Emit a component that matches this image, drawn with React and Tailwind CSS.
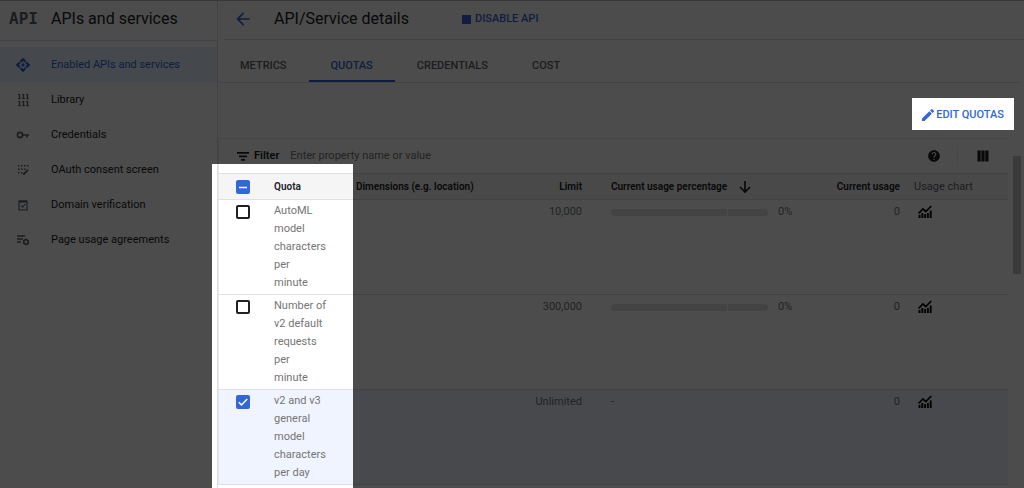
import React, { useState } from "react";
import { MdArrowBack, MdEdit, MdHelp } from "react-icons/md";

const EnabledIcon = () => (
  <svg viewBox="0 0 24 24" className="w-4 h-4" fill="currentColor">
    <path d="M12 1l5 5-2.500 2.500L12 6 9.500 8.500 7 6zM12 23l-5-5 2.500-2.500L12 18l2.500-2.500L17 18zM1 12l5-5 2.500 2.500L6 12l2.500 2.500L6 17zM23 12l-5 5-2.500-2.500L18 12l-2.500-2.500L18 7z" />
    <circle cx="12" cy="12" r="2.500" />
  </svg>
);

const LibraryIcon = () => (
  <svg viewBox="0 0 12 14" className="w-3 h-3.5" fill="none" stroke="currentColor" strokeWidth="1.400">
    <path d="M2.500 1v5M6.500 1v5M10.500 1v5M2.500 8v5M6.500 8v5M10.500 8v5" />
    <path d="M1 1.500h1.500M5 1.500h1.500M9 1.500h1.500M1 5.700h3M5 5.700h3M9 5.700h3M1 8.500h1.500M5 8.500h1.500M9 8.500h1.500M1 12.700h3M5 12.700h3M9 12.700h3" strokeWidth="0.900" />
  </svg>
);

const KeyIcon = () => (
  <svg viewBox="0 0 14 12" className="w-3.5 h-3" fill="none" stroke="currentColor" strokeWidth="1.600">
    <circle cx="4" cy="6" r="2.600" />
    <path d="M6.500 6H13M10.800 6v2.600" />
  </svg>
);

const ConsentIcon = () => (
  <svg viewBox="0 0 12 12" className="w-3 h-3" fill="currentColor">
    <path d="M1 1h1.500v1.500H1zM4 1h1.500v1.500H4zM7 1h1.500v1.500H7zM10 1h1.500v1.500H10zM1 4.500h1.500V6H1zM4 4.500h1.500V6H4zM7 4.500h1.500V6H7zM1 8h1.500v1.500H1zM4 8h1.500v1.500H4zM6 11V9.600L10.500 5l1.200 1.300L7.300 11z" />
  </svg>
);

const DomainIcon = () => (
  <svg viewBox="0 0 12 12" className="w-3 h-3" fill="none" stroke="currentColor">
    <path d="M2 2h8v9H2z" strokeWidth="1.200" />
    <path d="M2 2.500h8" strokeWidth="2" />
    <path d="M4 6.500l1.500 1.700L8.300 5" strokeWidth="1.100" />
  </svg>
);

const AgreementsIcon = () => (
  <svg viewBox="0 0 14 12" className="w-3.5 h-3" fill="none" stroke="currentColor">
    <path d="M1 2h8M1 5h6M1 8h4" strokeWidth="1.300" />
    <circle cx="10" cy="8" r="2.200" strokeWidth="1.500" />
    <path d="M10 4.500v1.300M10 10.200v1.300M7 6.300l1.100.600M11.900 9.100l1.100.600M7 9.700l1.100-.600M11.900 6.900l1.100-.600" strokeWidth="1.200" />
  </svg>
);

const FilterIcon = () => (
  <svg viewBox="0 0 16 16" className="w-4 h-4" fill="currentColor">
    <path d="M2 4h12v1.800H2zM4 7.500h8v1.800H4zM6 11h4v1.800H6z" />
  </svg>
);

const ColumnsIcon = () => (
  <svg viewBox="0 0 16 16" className="w-4 h-4" fill="currentColor">
    <path d="M2.500 2.500h3.200v11H2.500zM6.400 2.500h3.200v11H6.400zM10.300 2.500h3.200v11h-3.200z" />
  </svg>
);

const SortIcon = () => (
  <svg viewBox="0 0 16 16" className="w-4 h-4" fill="none" stroke="currentColor" strokeWidth="1.700">
    <path d="M8 2v11M3 8l5 5 5-5" />
  </svg>
);

const ChartIcon = () => (
  <svg viewBox="0 0 14 14" className="w-3.5 h-3.5" fill="none" stroke="currentColor">
    <path d="M1.500 10v3M4.300 8v5M7.100 9v4M9.900 8v5M12.700 5.500V13" strokeWidth="1.900" />
    <path d="M.500 8.500L5 4l2.800 2.500L13.300 1" strokeWidth="1.700" />
  </svg>
);

const navItems = [
  { label: "Enabled APIs and services", icon: <EnabledIcon />, active: true },
  { label: "Library", icon: <LibraryIcon /> },
  { label: "Credentials", icon: <KeyIcon /> },
  { label: "OAuth consent screen", icon: <ConsentIcon /> },
  { label: "Domain verification", icon: <DomainIcon /> },
  { label: "Page usage agreements", icon: <AgreementsIcon /> },
];

const tabs = ["METRICS", "QUOTAS", "CREDENTIALS", "COST"];

const initialQuotas = [
  { name: "AutoML model characters per\nminute", limit: "10,000", percent: 0, usage: 0, checked: false },
  { name: "Number of v2 default requests per\nminute", limit: "300,000", percent: 0, usage: 0, checked: false },
  { name: "v2 and v3 general model characters per day", limit: "Unlimited", percent: null, usage: 0, checked: true },
];

const Checkbox = ({ label, checked, mixed, onChange }) => (
  <span className="grid w-3.5 h-3.5">
    <input
      type="checkbox"
      aria-label={label}
      checked={checked}
      ref={(el) => { if (el) el.indeterminate = Boolean(mixed); }}
      onChange={onChange}
      className="col-start-1 row-start-1 appearance-none w-3.5 h-3.5 rounded-[2px] border-2 border-[#202124] checked:border-[#3367d6] checked:bg-[#3367d6] indeterminate:border-[#3367d6] indeterminate:bg-[#3367d6]"
    />
    {(checked || mixed) && (
      <svg viewBox="0 0 14 14" className="col-start-1 row-start-1 w-3.5 h-3.5 pointer-events-none" fill="none" stroke="white" strokeWidth="1.500">
        <path d={mixed ? "M3 7.500h8" : "M2.800 7.200l2.700 2.700 5.700-5.900"} />
      </svg>
    )}
  </span>
);

const Sidebar = () => (
  <aside className="w-[218px] shrink-0 border-r border-[#dadce0]">
    <div className="flex items-center h-10 pb-[3px] border-b border-[#dadce0]">
      <span className="w-[51px] pl-[9px] font-['DejaVu_Sans_Mono',monospace] text-base font-bold text-[#5f6368]">API</span>
      <h2 className="text-base">APIs and services</h2>
    </div>
    <nav className="pt-1.5">
      {navItems.map((item) => (
        <a
          key={item.label}
          href="#"
          className={`flex items-center h-[35px] text-[11px] leading-[17px] ${item.active ? "bg-[#e8f0fe] text-[#3367d6]" : "text-[#202124]"}`}
        >
          <span className={`flex justify-center w-[46px] mr-[5px] ${item.active ? "" : "text-[#5f6368]"}`}>{item.icon}</span>
          {item.label}
        </a>
      ))}
    </nav>
  </aside>
);

const QuotaTable = () => {
  const [quotas, setQuotas] = useState(initialQuotas);
  const count = quotas.filter((q) => q.checked).length;

  const toggle = (name) =>
    setQuotas(quotas.map((q) => (q.name === name ? { ...q, checked: !q.checked } : q)));
  const toggleAll = () =>
    setQuotas(quotas.map((q) => ({ ...q, checked: count !== quotas.length })));

  return (
    <table className="w-full table-fixed border-collapse text-[11px] leading-[18px]">
      <colgroup>
        <col className="w-[45px]" />
        <col className="w-[82px]" />
        <col />
        <col className="w-[92px]" />
        <col className="w-[228px]" />
        <col className="w-[90px]" />
        <col className="w-[98px]" />
      </colgroup>
      <thead>
        <tr className="h-[26px] bg-[#f5f5f5] border-y border-[#e0e0e0] text-left text-[10px] whitespace-nowrap">
          <th className="pl-[17px]">
            <Checkbox
              label="Select all quotas"
              checked={count === quotas.length}
              mixed={count > 0 && count < quotas.length}
              onChange={toggleAll}
            />
          </th>
          <th className="px-2.5 font-semibold">Quota</th>
          <th className="px-2.5 font-semibold">Dimensions (e.g. location)</th>
          <th className="px-2.5 font-semibold text-right">Limit</th>
          <th className="pl-[19px] font-semibold">
            <span className="flex items-center gap-2.5">
              Current usage percentage
              <SortIcon />
            </span>
          </th>
          <th className="px-2.5 font-semibold text-right">Current usage</th>
          <th className="pl-1 font-normal text-[11px] text-[#5f6368]">Usage chart</th>
        </tr>
      </thead>
      <tbody>
        {quotas.map((q) => (
          <tr
            key={q.name}
            className={`h-[95px] align-top border-b border-[#e0e0e0] text-[#757575] ${q.checked ? "bg-[#f0f4ff]" : ""}`}
          >
            <td className="pl-[17px] pt-[5px]">
              <Checkbox label={q.name} checked={q.checked} onChange={() => toggle(q.name)} />
            </td>
            <td className="pl-2.5 pr-[19px] py-0.5 whitespace-pre-line">{q.name}</td>
            <td></td>
            <td className="px-2.5 pt-[3px] text-right">{q.limit}</td>
            <td className="pl-[19px] pt-[3px]">
              {q.percent === null ? "-" : (
                <span className="flex items-center gap-2.5">
                  <span className="flex gap-px w-[157px] h-[7px] rounded-full overflow-hidden">
                    <span className="w-[116px] bg-[#e0e0e0]"></span>
                    <span className="flex-1 bg-[#e0e0e0]"></span>
                  </span>
                  {q.percent}%
                </span>
              )}
            </td>
            <td className="px-2.5 pt-[3px] text-right">{q.usage}</td>
            <td className="pl-2 pt-[5px] text-black">
              <button aria-label="Show usage chart" className="block"><ChartIcon /></button>
            </td>
          </tr>
        ))}
      </tbody>
    </table>
  );
};

const App = () => {
  return (
    <div className="flex min-h-screen bg-white font-[Roboto,sans-serif] text-[#202124] border-t border-[#bdbdbd]">
      <Sidebar />

      <main className="flex-1 min-w-0">
        {/* Page header */}
        <header className="flex items-center h-[39px] pb-0.5 ml-1.5 border-b border-[#e0e0e0]">
          <button aria-label="Back" className="ml-[9px] text-[#3367d6]">
            <MdArrowBack className="w-5 h-5" />
          </button>
          <h1 className="ml-[21px] text-base">API/Service details</h1>
          <button className="flex items-center gap-1 ml-[53px] text-[11px] leading-4 font-medium text-[#3367d6]">
            <span className="w-[9px] h-[9px] bg-[#3367d6]"></span>
            DISABLE API
          </button>
        </header>

        {/* Tabs */}
        <div role="tablist" className="flex mt-2.5 mr-[3px] h-[33px] border-b border-[#e0e0e0] text-[11px] font-medium">
          {tabs.map((tab) => (
            <button
              key={tab}
              role="tab"
              aria-selected={tab === "QUOTAS"}
              className={`px-[22px] pt-[3px] border-b-2 ${tab === "QUOTAS" ? "border-[#3367d6] text-[#3367d6]" : "border-transparent text-[#5f6368]"}`}
            >
              {tab}
            </button>
          ))}
        </div>

        <div className="flex">
          <div className="flex-1 min-w-0">
            <div className="flex justify-end items-center h-[55px] pr-1 pt-2">
              <button className="flex items-center text-[11px] leading-4 font-medium text-[#3367d6]">
                <MdEdit className="w-4 h-4" />
                EDIT QUOTAS
              </button>
            </div>

            {/* Quota panel */}
            <section className="border-t border-l border-[#e8e8e8]">
              <div className="flex items-center h-[34px] pl-4 text-[11px]">
                <FilterIcon />
                <label htmlFor="filter" className="ml-[3px] font-semibold">Filter</label>
                <input
                  id="filter"
                  placeholder="Enter property name or value"
                  className="flex-1 ml-[11px] outline-none placeholder:text-[#757575]"
                />
                <button aria-label="Help" className="px-4"><MdHelp className="w-3.5 h-3.5" /></button>
                <button aria-label="Column display options" className="px-[17px] border-l border-[#eeeeee]">
                  <ColumnsIcon />
                </button>
              </div>
              <QuotaTable />
            </section>
          </div>

          {/* Scrollbar */}
          <div className="w-2 h-[118px] mt-[73px] ml-[5px] mr-[3px] bg-[#c1c1c1]"></div>
        </div>
      </main>

      {/* Dimmed backdrop, open over the quota column and the edit button */}
      <div className="fixed inset-0 pointer-events-none bg-black/70 [clip-path:polygon(evenodd,0_0,100%_0,100%_100%,0_100%,0_0,212px_164px,353px_164px,353px_100%,212px_100%,212px_164px,0_0,calc(100%-112px)_98px,calc(100%-10px)_98px,calc(100%-10px)_130px,calc(100%-112px)_130px,calc(100%-112px)_98px,0_0)]"></div>
    </div>
  );
};

export default App;
